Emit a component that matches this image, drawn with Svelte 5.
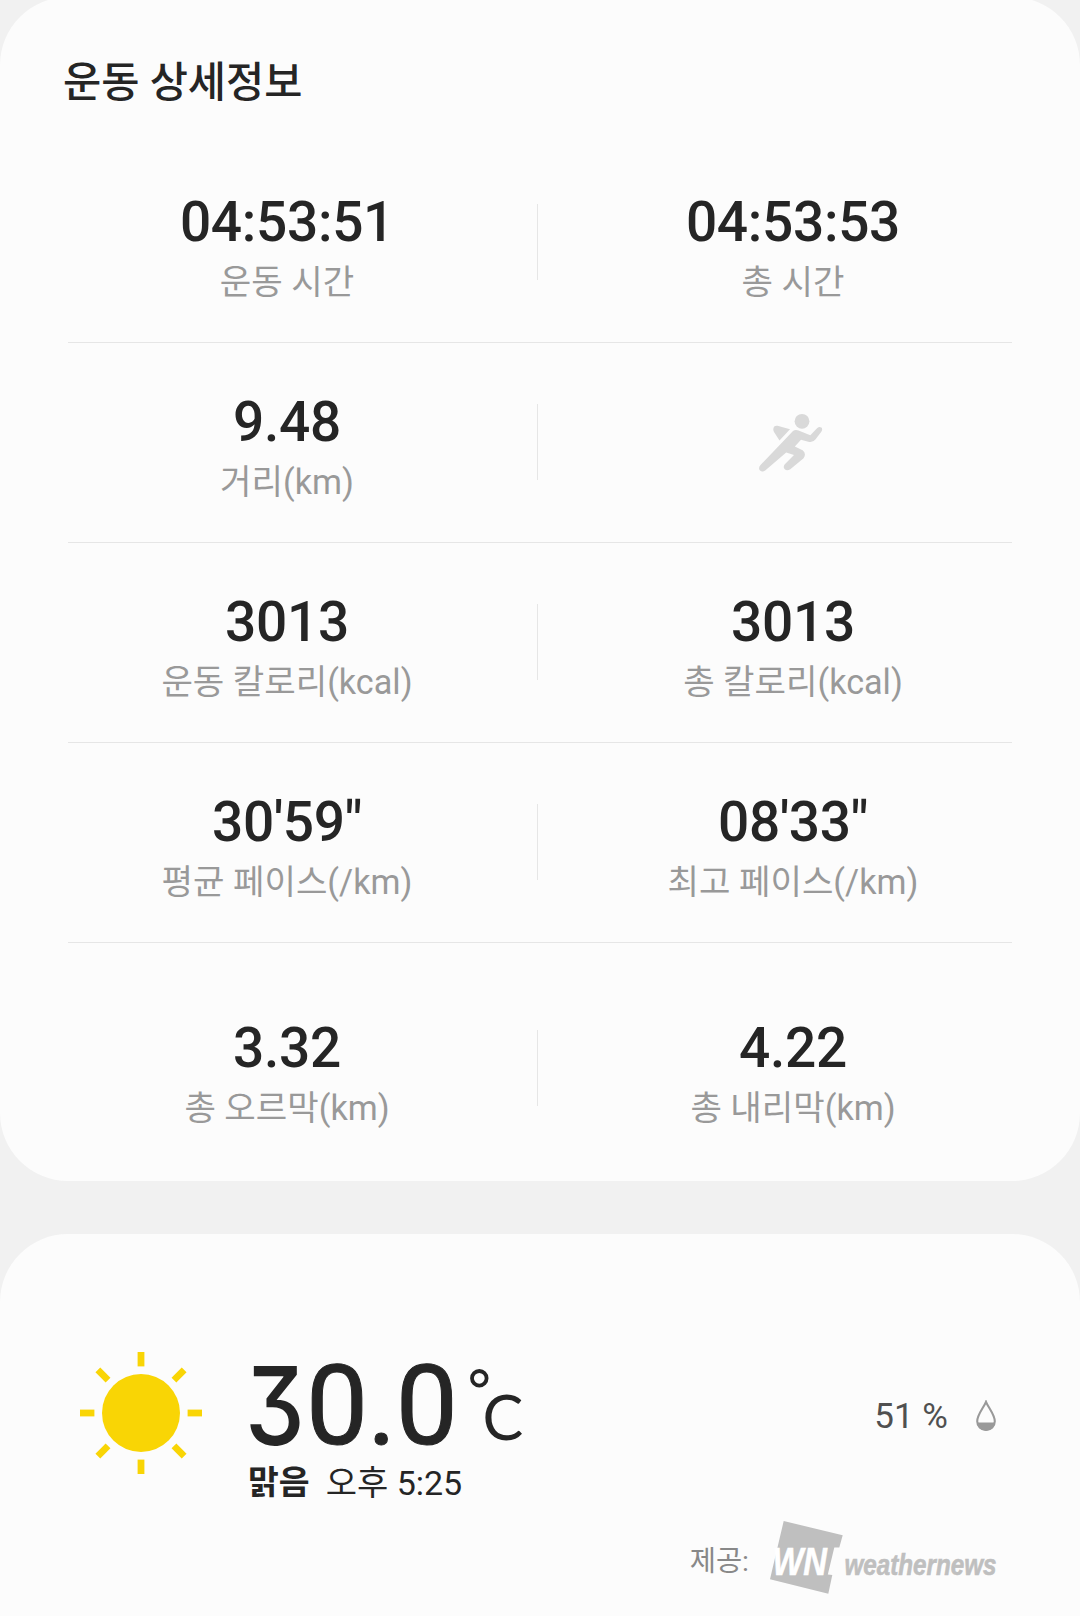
<script>
  const rows = [
    [
      { value: '04:53:51', label: '운동 시간' },
      { value: '04:53:53', label: '총 시간' }
    ],
    [
      { value: '9.48', label: '거리(km)' },
      { icon: 'run' }
    ],
    [
      { value: '3013', label: '운동 칼로리(kcal)' },
      { value: '3013', label: '총 칼로리(kcal)' }
    ],
    [
      { value: '30\'59"', label: '평균 페이스(/km)' },
      { value: '08\'33"', label: '최고 페이스(/km)' }
    ],
    [
      { value: '3.32', label: '총 오르막(km)' },
      { value: '4.22', label: '총 내리막(km)' }
    ]
  ];

  const rays = [0, 45, 90, 135, 180, 225, 270, 315];
</script>

<main class="page">
  <section class="card details">
    <h2>운동 상세정보</h2>
    {#each rows as row}
      <div class="row">
        {#each row as cell}
          <div class="cell">
            {#if cell.icon}
              <svg class="runner" viewBox="0 0 100 90" width="100" height="90" aria-hidden="true">
                <circle cx="62" cy="21.3" r="7.4" />
                <path d="M50 29.3 L37.5 25.8 Q33.5 25.3 33.3 29.2 Q33.2 30.5 34 32 L39.5 40.5 Z" />
                <path
                  d="M53 31 Q55.5 29.3 58.5 30.6 L70.3 35.2 L77.3 28 Q79.5 26 81.4 27.6 Q83 29.3 81.3 31.7 L75.6 39.3 Q73.3 42.6 69.2 42 L61 39.8 L54.8 46.6 L62.6 50.3 Q66.7 53.6 63.6 58.2 L50.3 69.2 Q47 71.3 44.8 69.3 Q42.8 67.2 44.6 64.4 L54 55 L46.2 52.5 L25.5 70.3 Q22.3 72.6 20 70.5 Q18 68.3 20.3 65.2 Z"
                />
              </svg>
            {:else}
              <div class="value">{cell.value}</div>
              <div class="label">{cell.label}</div>
            {/if}
          </div>
        {/each}
      </div>
    {/each}
  </section>

  <section class="card weather">
    <div class="weather__main">
      <svg class="sun" viewBox="-64 -64 128 128" width="128" height="128" aria-hidden="true">
        <circle r="39" />
        {#each rays as angle}
          <rect x="-3.4" y="-61" width="6.8" height="14.4" transform="rotate({angle})" />
        {/each}
      </svg>
      <div class="weather__info">
        <div class="temp">
          <span class="temp__lead">3</span><span class="temp__rest">0.0</span>
          <svg class="degree" viewBox="0 0 70 90" width="70" height="90">
            <circle cx="10.3" cy="11.3" r="7.3" />
            <text x="13.5" y="73">C</text>
          </svg>
        </div>
        <div class="condition"><b>맑음</b><span>오후 5:25</span></div>
      </div>
      <div class="humidity">
        <span>51 %</span>
        <svg viewBox="0 0 20 32" width="20" height="32" aria-hidden="true">
          <path
            d="M10 1.8 C8 7 1.2 14.5 1.2 21.2 A8.8 8.8 0 0 0 18.8 21.2 C18.8 14.5 12 7 10 1.8 Z"
            fill="none"
            stroke="#999"
            stroke-width="2.1"
          />
          <path d="M1.2 22.5 H18.8 A8.8 8.2 0 0 1 1.2 22.5 Z" fill="#999" />
        </svg>
      </div>
    </div>

    <div class="provider">
      <span>제공:</span>
      <svg viewBox="0 0 230 76" width="230" height="76" role="img" aria-label="weathernews">
        <path d="M15.7 2 L74.7 16.3 L71.3 28.5 L66.3 28.5 L59.8 55.5 L64.3 56 L60.3 74.7 L2 60.3 Z" fill="#bfbfbf" />
        <text class="mark" x="4.5" y="55.5" textLength="54.5" lengthAdjust="spacingAndGlyphs">WN</text>
        <text class="word" x="76.5" y="56" textLength="152" lengthAdjust="spacingAndGlyphs">weathernews</text>
      </svg>
    </div>
  </section>
</main>

<style>
  :global(body) {
    margin: 0;
    background: #f1f1f1;
  }

  .page {
    display: flex;
    flex-direction: column;
    gap: 53px;
    width: 1080px;
    height: 1616px;
    overflow: hidden;
    font-family: Roboto, 'Noto Sans CJK KR', sans-serif;
    color: #252525;
    background: #f1f1f1;
  }

  .card {
    box-sizing: border-box;
    flex-shrink: 0;
    border-radius: 68px;
    background: #fcfcfc;
  }

  .details {
    height: 1184px;
    margin-top: -3px;
  }

  h2 {
    box-sizing: border-box;
    height: 146px;
    margin: 0;
    padding: 56px 63px 0;
    font-size: 41.5px;
    font-weight: 500;
    line-height: 60px;
  }

  .row {
    box-sizing: border-box;
    display: flex;
    height: 200px;
    margin: 0 68px;
    padding-top: 61px;
    border-bottom: 1px solid #e6e6e6;
  }

  .row:last-child {
    height: 238px;
    padding-top: 87px;
    border-bottom: 0;
  }

  .cell {
    box-sizing: border-box;
    width: 470px;
    height: 76px;
    padding-right: 31px;
    border-right: 1px solid #e6e6e6;
    text-align: center;
    white-space: nowrap;
  }

  .cell + .cell {
    width: 474px;
    padding: 0 0 0 36px;
    border-right: 0;
  }

  .value {
    margin-top: -14px;
    font-size: 55px;
    font-weight: 500;
    line-height: 64px;
    letter-spacing: -0.3px;
  }

  .label {
    margin-top: 6px;
    font-size: 34.2px;
    line-height: 44px;
    color: #999;
  }

  .runner {
    margin: -4px 0 0 -6px;
    fill: #d9d9d9;
  }

  .weather {
    height: 450px;
    padding-top: 115px;
  }

  .weather__main {
    display: flex;
    align-items: flex-start;
    padding: 0 84px 0 77px;
  }

  .sun {
    fill: #f9d505;
  }

  .weather__info {
    margin-left: 43px;
  }

  .temp {
    display: flex;
    height: 112px;
    padding-top: 1px;
    box-sizing: border-box;
    line-height: 112px;
    white-space: nowrap;
  }

  .temp__lead {
    width: 59px;
    margin-left: -3px;
    margin-right: 2px;
    font-family: Inter, sans-serif;
    font-size: 108px;
    font-weight: 500;
    font-feature-settings: 'cv09';
    transform: scaleX(0.88);
    transform-origin: left;
  }

  .temp__rest {
    font-size: 110.5px;
    letter-spacing: -0.8px;
    -webkit-text-stroke: 1px #252525;
  }

  .degree {
    margin: 17px 0 0 12px;
  }

  .degree circle {
    fill: none;
    stroke: #252525;
    stroke-width: 3.8;
  }

  .degree text {
    font-family: Lato, sans-serif;
    font-size: 61px;
    fill: #252525;
  }

  .condition {
    display: flex;
    gap: 16px;
    font-size: 34px;
    line-height: 44px;
  }

  .condition b {
    font-size: 33.5px;
  }

  .humidity {
    display: flex;
    align-items: center;
    gap: 28px;
    height: 44px;
    margin: 45px 0 0 auto;
    font-size: 35px;
    color: #505050;
  }

  .provider {
    display: flex;
    justify-content: flex-end;
    gap: 19px;
    margin-top: 14px;
    padding-right: 82px;
    font-size: 28.5px;
    line-height: 85px;
    color: #888;
  }

  .provider svg {
    overflow: visible;
  }

  .mark {
    font: italic bold 39px 'Liberation Sans', sans-serif;
    fill: #fff;
    stroke: #fff;
    stroke-width: 0.6;
  }

  .word {
    font: italic bold 29px 'Liberation Sans', sans-serif;
    fill: #bfbfbf;
    stroke: #bfbfbf;
    stroke-width: 0.6;
  }
</style>
